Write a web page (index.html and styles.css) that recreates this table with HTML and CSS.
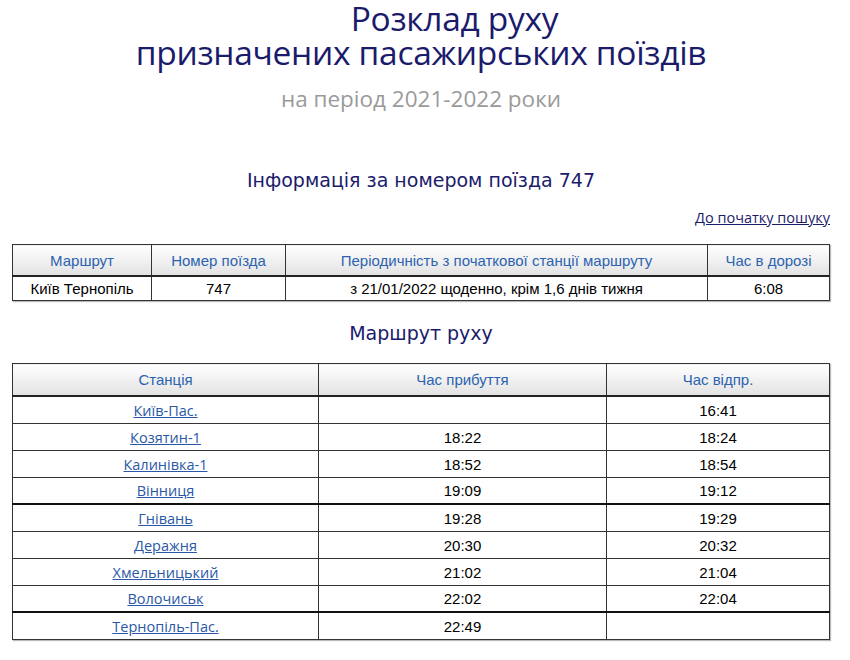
FILE: index.html
```html
<!DOCTYPE html>
<html lang="uk">
<head>
<meta charset="utf-8">
<title>Розклад руху</title>
<link rel="stylesheet" href="styles.css">
</head>
<body>
<header class="hero">
  <h1 class="hero-title"><span class="hero-line1">Розклад руху</span><span class="hero-line2">призначених пасажирських поїздів</span></h1>
  <p class="hero-sub">на період 2021-2022 роки</p>
</header>

<h2 class="section-title">Інформація за номером поїзда 747</h2>
<div class="back-row"><a class="back-link" href="#">До початку пошуку</a></div>

<table class="grid info">
  <thead>
    <tr><th class="c-route">Маршрут</th><th class="c-num">Номер поїзда</th><th class="c-period">Періодичність з початкової станції маршруту</th><th class="c-time">Час в дорозі</th></tr>
  </thead>
  <tbody>
    <tr><td>Київ Тернопіль</td><td>747</td><td>з 21/01/2022 щоденно, крім 1,6 днів тижня</td><td>6:08</td></tr>
  </tbody>
</table>

<h2 class="section-title route-title">Маршрут руху</h2>

<table class="grid stops">
  <thead>
    <tr><th class="c-station">Станція</th><th class="c-arr">Час прибуття</th><th>Час відпр.</th></tr>
  </thead>
  <tbody>
    <tr><td><a href="#">Київ-Пас.</a></td><td></td><td>16:41</td></tr>
    <tr><td><a href="#">Козятин-1</a></td><td>18:22</td><td>18:24</td></tr>
    <tr><td><a href="#">Калинівка-1</a></td><td>18:52</td><td>18:54</td></tr>
    <tr class="thick"><td><a href="#">Вінниця</a></td><td>19:09</td><td>19:12</td></tr>
    <tr><td><a href="#">Гнівань</a></td><td>19:28</td><td>19:29</td></tr>
    <tr><td><a href="#">Деражня</a></td><td>20:30</td><td>20:32</td></tr>
    <tr><td><a href="#">Хмельницький</a></td><td>21:02</td><td>21:04</td></tr>
    <tr class="thick"><td><a href="#">Волочиськ</a></td><td>22:02</td><td>22:04</td></tr>
    <tr><td><a href="#">Тернопіль-Пас.</a></td><td>22:49</td><td></td></tr>
  </tbody>
</table>
</body>
</html>
```

FILE: styles.css
```css
html, body {
  margin: 0;
  background: #fff;
}
body {
  padding: 0 20px 40px 12px;
  font-family: "Open Sans", "Noto Sans", sans-serif;
  color: #000;
}
.hero {
  text-align: center;
}
.hero-title {
  margin: 0;
  padding-top: 1px;
  font-family: "Open Sans", sans-serif;
  font-weight: 400;
  font-size: 33.5px;
  line-height: 34px;
  color: #1b1b6b;
  letter-spacing: -0.3px;
}
.hero-title span {
  display: block;
}
.hero-line1 {
  padding-left: 67px;
}
.hero-sub {
  margin: 16px 0 0;
  font-size: 22.5px;
  line-height: 28px;
  color: #9a9a9a;
}
.section-title {
  margin: 0;
  text-align: center;
  font-family: "DejaVu Sans", sans-serif;
  font-weight: 400;
  font-size: 19px;
  line-height: 24px;
  color: #1b1b6b;
}
.hero + .section-title {
  margin-top: 55px;
}
.back-row {
  text-align: right;
  margin-top: 14px;
  height: 20px;
}
.back-link {
  font-size: 14.5px;
  color: #1b1b6b;
  text-decoration: underline;
}
.grid {
  width: 100%;
  border-collapse: collapse;
  font-family: "Liberation Sans", Arial, sans-serif;
  font-size: 15px;
  border: 1px solid #333;
  box-shadow: 1px 1px 1px #bbb;
}
.grid th {
  font-weight: 400;
  color: #2c63b0;
  background: linear-gradient(#ffffff, #e2e2e2);
  border: 1px solid #333;
  border-bottom: 2px solid #222;
  padding: 0;
  text-align: center;
}
.grid td {
  border: 1px solid #333;
  padding: 0;
  text-align: center;
}
.info {
  margin-top: 18px;
}
.info th { height: 30px; }
.info td { height: 23px; }
.c-route { width: 138px; }
.c-num { width: 133px; }
.c-period { width: 421px; }
.route-title {
  margin-top: 20px;
}
.stops {
  margin-top: 18px;
}
.stops th { height: 31px; }
.stops td { height: 26px; }
.c-station { width: 305px; }
.c-arr { width: 287px; }
.stops tr.thick td {
  height: 25px;
  border-bottom: 2px solid #111;
}
.stops a {
  font-family: "Open Sans", "Noto Sans", sans-serif;
  font-size: 14.5px;
  color: #2a58a6;
  text-decoration: underline;
}
```
